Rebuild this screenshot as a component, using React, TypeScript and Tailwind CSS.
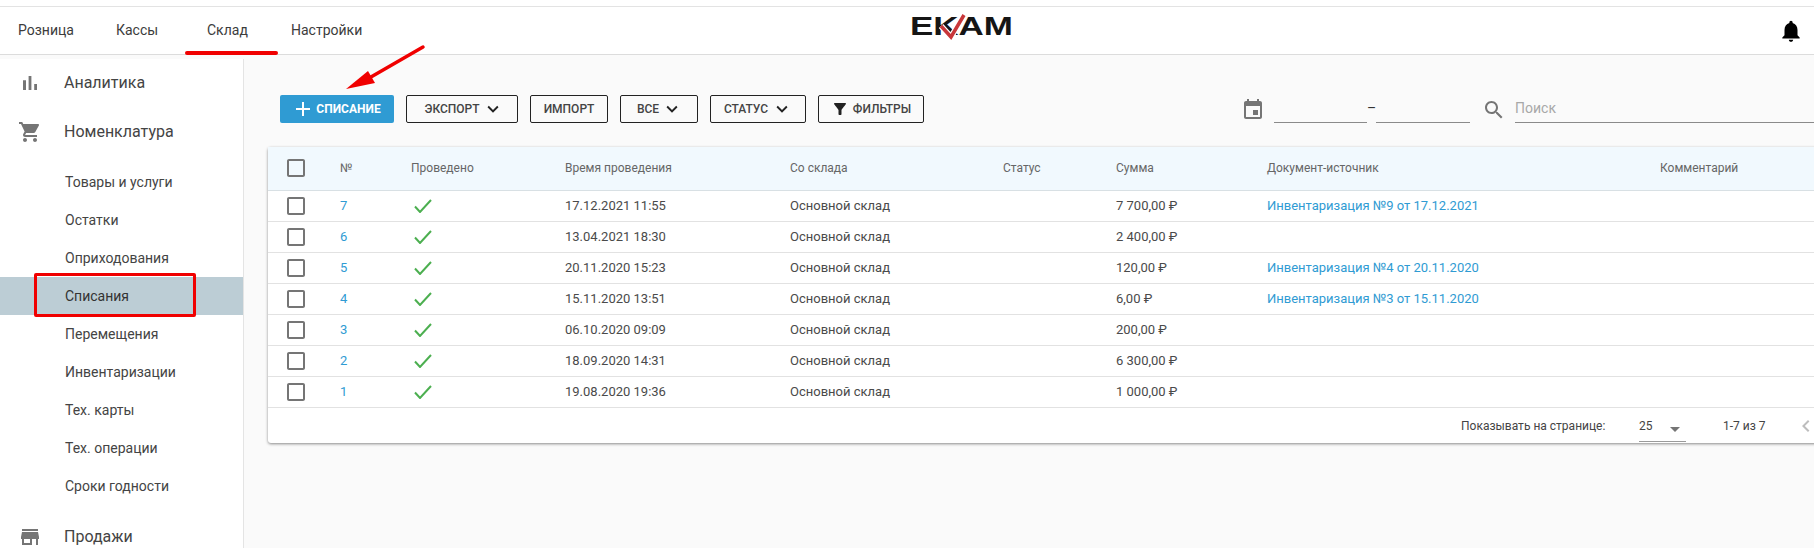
const ICONS = {
  chart: "M5 9.2h3V19H5zM10.6 5h2.8v14h-2.8zm5.6 8H19v6h-2.8z",
  cart: "M7 18c-1.1 0-1.99.9-1.99 2S5.9 22 7 22s2-.9 2-2-.9-2-2-2zM1 2v2h2l3.6 7.59-1.35 2.45c-.16.28-.25.61-.25.96 0 1.1.9 2 2 2h12v-2H7.42c-.14 0-.25-.11-.25-.25l.03-.12.9-1.63h7.45c.75 0 1.41-.41 1.75-1.03l3.58-6.49c.08-.14.12-.31.12-.48 0-.55-.45-1-1-1H5.21l-.94-2H1zm16 16c-1.1 0-1.99.9-1.99 2s.89 2 1.99 2 2-.9 2-2-.9-2-2-2z",
  store: "M20 4H4v2h16V4zm1 10v-2l-1-5H4l-1 5v2h1v6h10v-6h4v6h2v-6h1zm-9 4H6v-4h6v4z",
  bell: "M12 22c1.1 0 2-.9 2-2h-4c0 1.1.89 2 2 2zm6-6v-5c0-3.07-1.64-5.64-4.5-6.32V4c0-.83-.67-1.5-1.5-1.5s-1.5.67-1.5 1.5v.68C7.63 5.36 6 7.92 6 11v5l-2 2v1h16v-1l-2-2z",
  event: "M17 12h-5v5h5v-5zM16 1v2H8V1H6v2H5c-1.11 0-1.99.9-1.99 2L3 19c0 1.1.89 2 2 2h14c1.1 0 2-.9 2-2V5c0-1.1-.9-2-2-2h-1V1h-2zm3 18H5V8h14v11z",
  search: "M15.5 14h-.79l-.28-.27C15.41 12.59 16 11.11 16 9.5 16 5.91 13.09 3 9.5 3S3 5.91 3 9.5 5.91 16 9.5 16c1.61 0 3.09-.59 4.23-1.57l.27.28v.79l5 4.99L20.49 19l-4.99-5zm-6 0C7.01 14 5 11.99 5 9.5S7.01 5 9.5 5 14 7.01 14 9.5 11.99 14 9.5 14z",
  filter: "M4.25 5.61C6.27 8.2 10 13 10 13v6c0 .55.45 1 1 1h2c.55 0 1-.45 1-1v-6s3.72-4.8 5.74-7.39c.51-.66.04-1.61-.79-1.61H5.04c-.83 0-1.3.95-.79 1.61z",
  expand: "M16.59 8.59L12 13.17 7.41 8.59 6 10l6 6 6-6z",
  add: "M19 13h-6v6h-2v-6H5v-2h6V5h2v6h6v2z",
  box: "M19 5v14H5V5h14m0-2H5c-1.1 0-2 .9-2 2v14c0 1.1.9 2 2 2h14c1.1 0 2-.9 2-2V5c0-1.1-.9-2-2-2z",
  left: "M15.41 7.41L14 6l-6 6 6 6 1.41-1.41L10.83 12z",
};

function Icon({ name, className }: { name: keyof typeof ICONS; className?: string }) {
  return (
    <svg viewBox="0 0 24 24" fill="currentColor" className={className} aria-hidden="true">
      <path d={ICONS[name]} />
    </svg>
  );
}

const topLinks = [
  { label: "Розница", className: "w-[98px]" },
  { label: "Кассы", className: "w-[91px]" },
  { label: "Склад", className: "w-[84px]" },
  { label: "Настройки", className: "" },
];

const subItems = ["Товары и услуги", "Остатки", "Оприходования", "Списания", "Перемещения", "Инвентаризации", "Тех. карты", "Тех. операции", "Сроки годности"];

const rows = [
  { id: 7, date: "17.12.2021 11:55", sum: "7 700,00 ₽", doc: "Инвентаризация №9 от 17.12.2021" },
  { id: 6, date: "13.04.2021 18:30", sum: "2 400,00 ₽", doc: "" },
  { id: 5, date: "20.11.2020 15:23", sum: "120,00 ₽", doc: "Инвентаризация №4 от 20.11.2020" },
  { id: 4, date: "15.11.2020 13:51", sum: "6,00 ₽", doc: "Инвентаризация №3 от 15.11.2020" },
  { id: 3, date: "06.10.2020 09:09", sum: "200,00 ₽", doc: "" },
  { id: 2, date: "18.09.2020 14:31", sum: "6 300,00 ₽", doc: "" },
  { id: 1, date: "19.08.2020 19:36", sum: "1 000,00 ₽", doc: "" },
];

const outlineBtn = "h-[28px] shrink-0 flex items-center justify-center rounded-[2px] border border-[#222] text-[12px] font-medium text-[#444]";

function Logo() {
  return (
    <svg viewBox="0 0 101 24" className="w-[101px] h-[24px] overflow-visible" role="img" aria-label="EKAM">
      <text x="-1" y="20" textLength="103" lengthAdjust="spacingAndGlyphs" fontFamily="'Liberation Sans', sans-serif" fontWeight="700" fontSize="26" fill="#151515">EKAM</text>
      <path d="M30 11l10 11L53 0" fill="none" stroke="#fff" strokeWidth="6" />
      <path d="M30 11l10 11L53 0" fill="none" stroke="#c8373a" strokeWidth="3.5" />
    </svg>
  );
}

export default function App() {
  return (
    <div className="relative w-[1814px] h-[548px] overflow-hidden bg-[#fafafa] font-['Roboto',sans-serif] text-[#444]">
      <div className="h-[6px] bg-white border-b border-[#e3e3e3] box-content" />
      <header className="relative h-[48px] bg-white border-b border-[#dcdcdc] flex items-center pl-[18px]">
        <nav className="flex text-[14px] text-[#3c3c3c]">
          {topLinks.map((l) => (
            <span key={l.label} className={l.className}>{l.label}</span>
          ))}
        </nav>
        <div className="absolute left-[911px] top-[8px]"><Logo /></div>
        <Icon name="bell" className="absolute left-[1778px] top-[11px] w-[26px] h-[26px] text-black" />
      </header>

      <div className="flex h-[493px] pt-[4px]">
        <aside className="w-[244px] shrink-0 bg-white border-r border-[#e4e4e4] text-[#444]">
          <div className="h-[47px] pt-[1px] flex items-center pl-[18px]">
            <Icon name="chart" className="w-[24px] h-[24px] text-[#757575]" />
            <span className="ml-[22px] text-[16px]">Аналитика</span>
          </div>
          <div className="h-[51px] flex items-center pl-[18px]">
            <Icon name="cart" className="w-[24px] h-[24px] text-[#757575]" />
            <span className="ml-[22px] text-[16px]">Номенклатура</span>
          </div>
          <ul className="pt-[6px] text-[14px]">
            {subItems.map((item) => (
              <li key={item} className={`h-[38px] flex items-center pl-[65px] ${item === "Списания" ? "bg-[#bccdd5] text-[#333]" : ""}`}>{item}</li>
            ))}
          </ul>
          <div className="mt-[10px] h-[44px] flex items-center pl-[18px]">
            <Icon name="store" className="w-[24px] h-[24px] text-[#757575]" />
            <span className="ml-[22px] text-[16px]">Продажи</span>
          </div>
        </aside>

        <main className="flex-1 pl-[24px] pt-[36px] min-w-0">
          <div className="flex items-end pl-[12px]">
            <button className="w-[114px] h-[28px] shrink-0 flex items-center justify-center rounded-[2px] bg-[#2f9bd3] text-white text-[12px] font-bold">
              <Icon name="add" className="w-[24px] h-[24px] -ml-[2px]" />
              <span className="ml-[1px]">СПИСАНИЕ</span>
            </button>
            <button className={`${outlineBtn} w-[112px] ml-[12px] pl-[4px]`}>ЭКСПОРТ<Icon name="expand" className="w-[22px] h-[22px] ml-[2px] text-[#222]" /></button>
            <button className={`${outlineBtn} w-[78px] ml-[12px]`}>ИМПОРТ</button>
            <button className={`${outlineBtn} w-[78px] ml-[12px] pl-[2px]`}>ВСЕ<Icon name="expand" className="w-[22px] h-[22px] ml-[2px] text-[#222]" /></button>
            <button className={`${outlineBtn} w-[96px] ml-[12px] pl-[1px]`}>СТАТУС<Icon name="expand" className="w-[22px] h-[22px] ml-[3px] text-[#222]" /></button>
            <button className={`${outlineBtn} w-[106px] ml-[12px]`}><Icon name="filter" className="w-[18px] h-[18px] mr-[4px] text-[#222]" />ФИЛЬТРЫ</button>

            <Icon name="event" className="w-[24px] h-[24px] shrink-0 ml-[317px] mb-[1px] text-[#757575]" />
            <div className="w-[93px] h-[28px] shrink-0 ml-[9px] border-b border-[#8a8a8a]" />
            <div className="w-[9px] h-[28px] shrink-0 flex items-center justify-center text-[14px] leading-none text-[#333] pb-[3px]">–</div>
            <div className="w-[94px] h-[28px] shrink-0 border-b border-[#8a8a8a]" />
            <Icon name="search" className="w-[24px] h-[24px] shrink-0 ml-[12px] mb-[1px] text-[#757575]" />
            <div className="w-[400px] h-[28px] shrink-0 ml-[9px] border-b border-[#8a8a8a] text-[14px] leading-[26px] text-[#a8a8a8]">Поиск</div>
          </div>

          <div className="mt-[24px] w-[1600px] h-[296px] rounded-[3px] bg-white shadow-[0_1px_3px_rgba(0,0,0,0.45)]">
            <table className="table-fixed w-full border-collapse text-left">
              <thead>
                <tr className="h-[43px] bg-[#f1f9fe] border-b border-[#d8e0e4] text-[12px] text-[#666]">
                  <th className="w-[72px] pl-[16px] font-normal"><Icon name="box" className="w-[24px] h-[24px] text-[#757575]" /></th>
                  <th className="w-[71px] font-normal">№</th>
                  <th className="w-[154px] font-normal">Проведено</th>
                  <th className="w-[225px] font-normal">Время проведения</th>
                  <th className="w-[213px] font-normal">Со склада</th>
                  <th className="w-[113px] font-normal">Статус</th>
                  <th className="w-[151px] font-normal">Сумма</th>
                  <th className="w-[393px] font-normal">Документ-источник</th>
                  <th className="font-normal">Комментарий</th>
                </tr>
              </thead>
              <tbody className="text-[13px] text-[#4a4a4a]">
                {rows.map((r) => (
                  <tr key={r.id} className="h-[31px] border-b border-[#e2e2e2]">
                    <td className="pl-[16px]"><Icon name="box" className="w-[24px] h-[24px] text-[#757575]" /></td>
                    <td className="text-[#2f9bd3]">{r.id}</td>
                    <td>
                      <svg viewBox="0 0 18 14" className="w-[18px] h-[14px] ml-[3px]" fill="none" stroke="#4caf50" strokeWidth="2" aria-hidden="true">
                        <path d="M1 7.5l5 5.5L17 1" />
                      </svg>
                    </td>
                    <td>{r.date}</td>
                    <td>Основной склад</td>
                    <td />
                    <td>{r.sum}</td>
                    <td className="text-[#2f9bd3]">{r.doc}</td>
                    <td />
                  </tr>
                ))}
              </tbody>
            </table>
            <div className="h-[37px] flex items-center pl-[1193px] text-[12px] text-[#444]">
              <span className="w-[178px]">Показывать на странице:</span>
              <div className="relative w-[47px] h-[30px] mt-[1px] border-b border-[#9a9a9a] flex items-center">
                <span>25</span>
                <span className="absolute right-[6px] top-[15px] border-x-[5px] border-t-[5px] border-x-transparent border-t-[#757575]" />
              </div>
              <span className="ml-[37px]">1-7 из 7</span>
              <Icon name="left" className="ml-[28px] w-[24px] h-[24px] text-[#bdbdbd]" />
            </div>
          </div>
        </main>
      </div>

      {/* пометки поверх скриншота */}
      <div className="absolute left-[185px] top-[51px] w-[93px] h-[4px] rounded-full bg-[#f00000]" />
      <div className="absolute left-[34px] top-[273px] w-[162px] h-[44px] rounded-[2px] border-[3px] border-[#f00000]" />
      <svg className="absolute left-[340px] top-[40px] w-[90px] h-[55px]" viewBox="0 0 90 55" aria-hidden="true">
        <path d="M83 7L24 41" stroke="#f00000" strokeWidth="3.5" strokeLinecap="round" />
        <path d="M6 49L28 31l7 12z" fill="#f00000" />
      </svg>
    </div>
  );
}
